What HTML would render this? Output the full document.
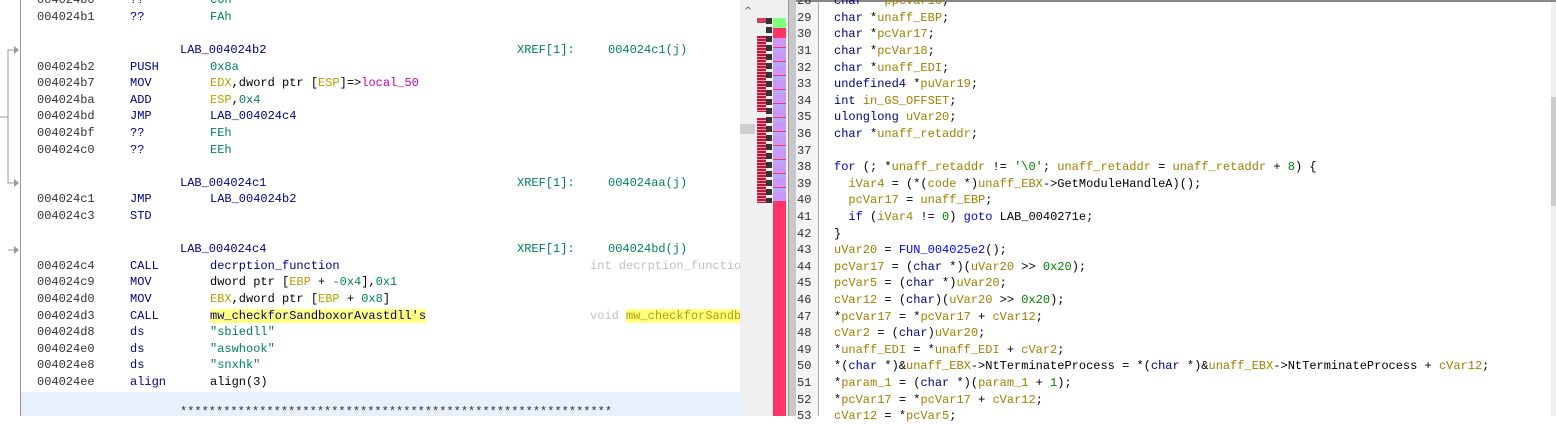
<!DOCTYPE html>
<html><head><style>
body{margin:0;width:1556px;height:416px;overflow:hidden;background:#fff;position:relative;font-family:"Liberation Mono",monospace;font-size:12px;}
.r{position:absolute;height:16.6px;line-height:16.6px;white-space:pre;}
.a{color:#333}.m{color:#000080}.o{color:#008060}.l{color:#000080}.x{color:#008060}
.g{color:#b8a000}.p{color:#c000c0}.c{color:#c0c0c0}
.k{color:#0000c0}.v{color:#a08000}.n{color:#008000}.f{color:#0000ff}.t{color:#000080}
.hl{background:#ffff80}
</style></head><body>
<!-- left pane -->
<div style="position:absolute;left:20px;top:0;width:1px;height:416px;background:#999"></div>
<div style="position:absolute;left:21px;top:392px;width:719px;height:24px;background:#e8f0fc"></div>
<svg style="position:absolute;left:0;top:0" width="20" height="416">
<path d="M15 50H8V183H15 M0 117H8 M15 250H8" stroke="#999" fill="none"/>
<path d="M14 46l5 4-5 4z M14 179l5 4-5 4z M14 246l5 4-5 4z" fill="#999"/>
</svg>
<div id="L"></div>
<!-- middle scroll -->
<div style="position:absolute;left:740px;top:0;width:50px;height:416px;background:#f0f0f0"></div>
<div style="position:absolute;left:740px;top:124px;width:15px;height:10px;background:#cfcfcf"></div>
<div style="position:absolute;left:744px;top:6px;font-size:10px;color:#555;font-family:'DejaVu Sans'">^</div>
<div style="position:absolute;left:757px;top:18px;width:9px;height:5px;background:#d04060"></div>
<div style="position:absolute;left:757px;top:36px;width:9px;height:76px;background:repeating-linear-gradient(#c0143c 0 2px,#e89aaa 2px 3px)"></div>
<div style="position:absolute;left:757px;top:118px;width:9px;height:85px;background:repeating-linear-gradient(#c0143c 0 2px,#e89aaa 2px 3px)"></div>
<div style="position:absolute;left:766px;top:18px;width:6px;height:185px;background:repeating-linear-gradient(#333 0 6px,#f0f0f0 6px 9px)"></div>
<div style="position:absolute;left:773px;top:18px;width:13px;height:398px;background:#ff3366"></div>
<div style="position:absolute;left:773px;top:18px;width:13px;height:10px;background:#80ff80"></div>
<div style="position:absolute;left:773px;top:38px;width:13px;height:163px;background:repeating-linear-gradient(#c898f8 0 9px,#ff3366 9px 10px,#b8a8f8 10px 14px)"></div>
<div style="position:absolute;left:788px;top:0;width:8px;height:416px;background:#c8c8c8;border-left:1px solid #999"></div>
<!-- right pane -->
<div style="position:absolute;left:796px;top:0;width:760px;height:2px;background:#888"></div>
<div style="position:absolute;left:796px;top:2px;width:22px;height:414px;background:#f4f4f4;border-right:1px solid #aaa"></div>
<div style="position:absolute;left:1551px;top:2px;width:5px;height:414px;background:#f0f0f0"></div>
<div style="position:absolute;left:1551px;top:97px;width:5px;height:109px;background:#ccc"></div>
<div id="R"></div>
<script>
var L=[
[-1,'004024b0','??','<span class="o">C6h</span>'],
[0,'004024b1','??','<span class="o">FAh</span>'],
[2,null,'LAB_004024b2','004024c1(j)'],
[3,'004024b2','PUSH','<span class="o">0x8a</span>'],
[4,'004024b7','MOV','<span class="g">EDX</span>,dword ptr [<span class="g">ESP</span>]=&gt;<span class="p">local_50</span>'],
[5,'004024ba','ADD','<span class="g">ESP</span>,<span class="o">0x4</span>'],
[6,'004024bd','JMP','<span class="l">LAB_004024c4</span>'],
[7,'004024bf','??','<span class="o">FEh</span>'],
[8,'004024c0','??','<span class="o">EEh</span>'],
[10,null,'LAB_004024c1','004024aa(j)'],
[11,'004024c1','JMP','<span class="l">LAB_004024b2</span>'],
[12,'004024c3','STD',''],
[14,null,'LAB_004024c4','004024bd(j)'],
[15,'004024c4','CALL','<span class="l">decrption_function</span>'],
[16,'004024c9','MOV','dword ptr [<span class="g">EBP</span> + <span class="o">-0x4</span>],<span class="o">0x1</span>'],
[17,'004024d0','MOV','<span class="g">EBX</span>,dword ptr [<span class="g">EBP</span> + <span class="o">0x8</span>]'],
[18,'004024d3','CALL','<span class="l hl">mw_checkforSandboxorAvastdll\'s</span>'],
[19,'004024d8','ds','<span class="o">"sbiedll"</span>'],
[20,'004024e0','ds','<span class="o">"aswhook"</span>'],
[21,'004024e8','ds','<span class="o">"snxhk"</span>'],
[22,'004024ee','align','align(3)']];
var h='';
L.forEach(function(e){var t=8.7+e[0]*16.6;
if(e[1]===null){h+='<div class="r l" style="left:180px;top:'+t+'px">'+e[2]+'</div><div class="r x" style="left:517px;top:'+t+'px">XREF[1]:</div><div class="r x" style="left:608px;top:'+t+'px">'+e[3]+'</div>';}
else{h+='<div class="r a" style="left:37px;top:'+t+'px">'+e[1]+'</div><div class="r m" style="left:130px;top:'+t+'px">'+e[2]+'</div><div class="r" style="left:210px;top:'+t+'px">'+e[3]+'</div>';}});
h+='<div class="r c" style="left:590px;top:'+(8.7+15*16.6)+'px;width:150px;overflow:hidden">int decrption_function</div>';
h+='<div class="r c" style="left:590px;top:'+(8.7+18*16.6)+'px;width:150px;overflow:hidden">void <span class="hl" style="color:#b8a000">mw_checkforSandboxorAvast</span></div>';
h+='<div class="r a" style="left:180px;top:404px">'+'*'.repeat(60)+'</div>';
document.getElementById('L').innerHTML=h;
var R=[
[28,'<span class="t">char</span> **<span class="v">ppcVar16</span>;'],
[29,'<span class="t">char</span> *<span class="v">unaff_EBP</span>;'],
[30,'<span class="t">char</span> *<span class="v">pcVar17</span>;'],
[31,'<span class="t">char</span> *<span class="v">pcVar18</span>;'],
[32,'<span class="t">char</span> *<span class="v">unaff_EDI</span>;'],
[33,'<span class="t">undefined4</span> *<span class="v">puVar19</span>;'],
[34,'<span class="t">int</span> <span class="v">in_GS_OFFSET</span>;'],
[35,'<span class="t">ulonglong</span> <span class="v">uVar20</span>;'],
[36,'<span class="t">char</span> *<span class="v">unaff_retaddr</span>;'],
[37,''],
[38,'<span class="k">for</span> (; *<span class="v">unaff_retaddr</span> != <span class="n">\'\\0\'</span>; <span class="v">unaff_retaddr</span> = <span class="v">unaff_retaddr</span> + <span class="n">8</span>) {'],
[39,'  <span class="v">iVar4</span> = (*(<span class="v">code</span> *)<span class="v">unaff_EBX</span>-&gt;GetModuleHandleA)();'],
[40,'  <span class="v">pcVar17</span> = <span class="v">unaff_EBP</span>;'],
[41,'  <span class="k">if</span> (<span class="v">iVar4</span> != <span class="n">0</span>) <span class="k">goto</span> LAB_0040271e;'],
[42,'}'],
[43,'<span class="v">uVar20</span> = <span class="f">FUN_004025e2</span>();'],
[44,'<span class="v">pcVar17</span> = (<span class="t">char</span> *)(<span class="v">uVar20</span> &gt;&gt; <span class="n">0x20</span>);'],
[45,'<span class="v">pcVar5</span> = (<span class="t">char</span> *)<span class="v">uVar20</span>;'],
[46,'<span class="v">cVar12</span> = (<span class="t">char</span>)(<span class="v">uVar20</span> &gt;&gt; <span class="n">0x20</span>);'],
[47,'*<span class="v">pcVar17</span> = *<span class="v">pcVar17</span> + <span class="v">cVar12</span>;'],
[48,'<span class="v">cVar2</span> = (<span class="t">char</span>)<span class="v">uVar20</span>;'],
[49,'*<span class="v">unaff_EDI</span> = *<span class="v">unaff_EDI</span> + <span class="v">cVar2</span>;'],
[50,'*(<span class="t">char</span> *)&amp;<span class="v">unaff_EBX</span>-&gt;NtTerminateProcess = *(<span class="t">char</span> *)&amp;<span class="v">unaff_EBX</span>-&gt;NtTerminateProcess + <span class="v">cVar12</span>;'],
[51,'*<span class="v">param_1</span> = (<span class="t">char</span> *)(<span class="v">param_1</span> + <span class="n">1</span>);'],
[52,'*<span class="v">pcVar17</span> = *<span class="v">pcVar17</span> + <span class="v">cVar12</span>;'],
[53,'<span class="v">cVar12</span> = *<span class="v">pcVar5</span>;']];
h='';
R.forEach(function(e){var t=9.7+(e[0]-29)*16.6;
h+='<div class="r a" style="left:797px;top:'+t+'px">'+e[0]+'</div><div class="r" style="left:834px;top:'+t+'px">'+e[1]+'</div>';});
document.getElementById('R').innerHTML=h;
</script>
</body></html>
